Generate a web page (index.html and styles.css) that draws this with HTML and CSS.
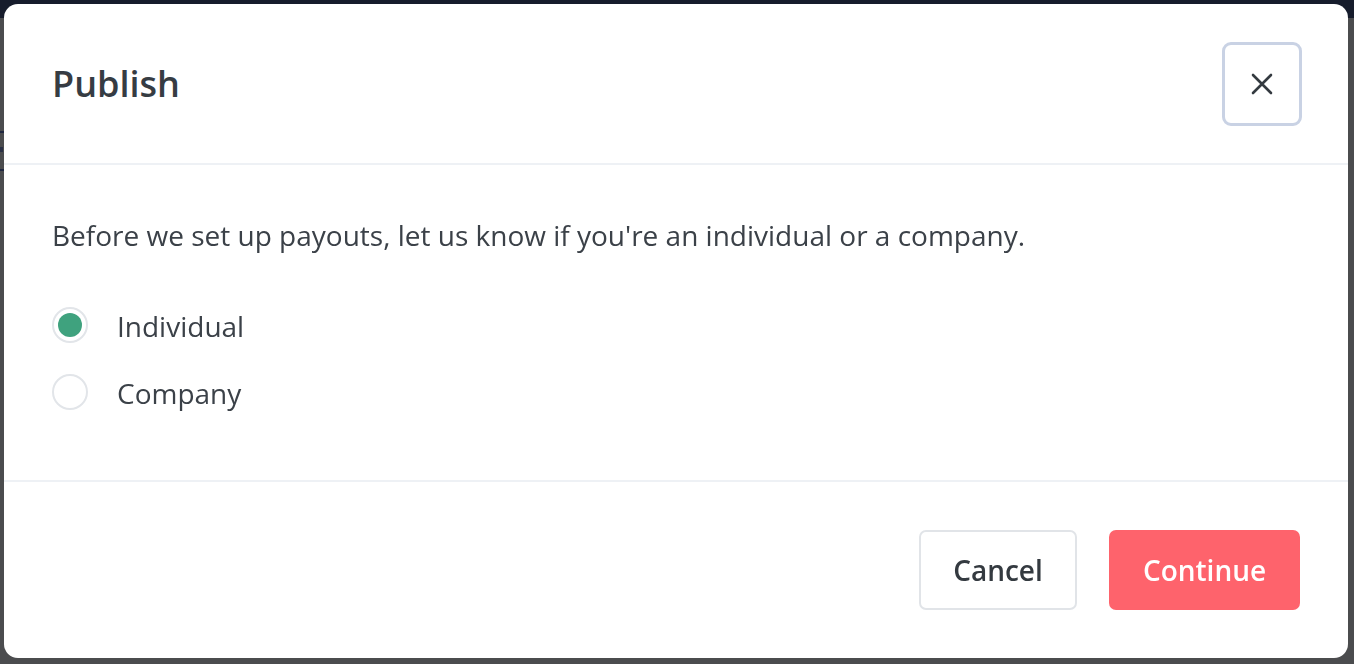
FILE: index.html
```html
<!DOCTYPE html>
<html lang="en">
<head>
<meta charset="utf-8">
<title>Publish</title>
<link rel="stylesheet" href="styles.css">
</head>
<body>
<div class="page">
  <div class="topbar"></div>
  <div class="page-rest">
    <div class="ghost ghost-a"></div>
    <div class="ghost ghost-b"></div>
    <div class="ghost ghost-c"></div>
  </div>
</div>
<div class="modal" role="dialog" aria-labelledby="modal-title">
  <header class="modal-header">
    <h1 id="modal-title" class="modal-title">Publish</h1>
    <button class="close-btn" aria-label="Close">
      <svg width="22" height="22" viewBox="0 0 22 22" aria-hidden="true">
        <path d="M2 2 L20 20 M20 2 L2 20" stroke="#343a40" stroke-width="2.6" stroke-linecap="round" fill="none"/>
      </svg>
    </button>
  </header>
  <section class="modal-body">
    <p class="intro">Before we set up payouts, let us know if you're an individual or a company.</p>
    <div class="options">
      <label class="option">
        <span class="radio checked"><span class="dot"></span></span>
        <span class="option-label">Individual</span>
      </label>
      <label class="option">
        <span class="radio"></span>
        <span class="option-label">Company</span>
      </label>
    </div>
  </section>
  <footer class="modal-footer">
    <button class="btn btn-secondary">Cancel</button>
    <button class="btn btn-primary">Continue</button>
  </footer>
</div>
</body>
</html>
```

FILE: styles.css
```css
* { box-sizing: border-box; }

html, body {
  margin: 0;
  padding: 0;
  height: 100%;
}

body {
  background: #4b4c4e;
  font-family: "Open Sans", "Liberation Sans", sans-serif;
  overflow: hidden;
}

.page {
  display: flex;
  flex-direction: column;
  height: 100%;
}

.topbar {
  height: 18px;
  background: #161c2c;
  flex: none;
}

.page-rest {
  flex: 1;
  background: #4b4c4e;
  padding-top: 113px;
}

.ghost {
  width: 4px;
  background: #1f2740;
}
.ghost-a { height: 2px; }
.ghost-b { height: 5px; margin-top: 14px; width: 3px; background: #2a3045; }
.ghost-c { height: 2px; margin-top: 17px; }

.modal {
  position: fixed;
  top: 4px;
  left: 4px;
  width: 1344px;
  height: 654px;
  background: #ffffff;
  border-radius: 14px;
  display: flex;
  flex-direction: column;
  color: #373d44;
}

.modal-header {
  height: 161px;
  flex: none;
  display: flex;
  align-items: center;
  justify-content: space-between;
  padding: 0 46px 0 48px;
  border-bottom: 2px solid #eef1f5;
}

.modal-title {
  margin: 0;
  font-size: 36px;
  font-weight: 600;
  color: #363c43;
}

.close-btn {
  width: 80px;
  height: 84px;
  border: 3px solid #c9d2e4;
  border-radius: 9px;
  background: #fff;
  display: flex;
  align-items: center;
  justify-content: center;
  padding: 0;
}

.modal-body {
  flex: 1;
  padding: 50px 48px 0 48px;
  border-bottom: 2px solid #eef1f5;
}

.intro {
  margin: 0;
  font-size: 28px;
  line-height: 40px;
  color: #3b4148;
}

.options {
  display: flex;
  flex-direction: column;
  gap: 31px;
  margin-top: 52px;
}

.option {
  display: flex;
  align-items: center;
  gap: 29px;
  height: 36px;
}

.radio {
  width: 36px;
  height: 36px;
  border-radius: 50%;
  border: 2px solid #e2e5e9;
  display: flex;
  align-items: center;
  justify-content: center;
  flex: none;
}

.dot {
  width: 24px;
  height: 24px;
  border-radius: 50%;
  background: #3fa27e;
}

.option-label {
  font-size: 28px;
  color: #3b4148;
  padding-top: 1px;
}

.modal-footer {
  height: 176px;
  flex: none;
  display: flex;
  align-items: center;
  justify-content: flex-end;
  gap: 32px;
  padding: 0 48px;
}

.btn {
  height: 80px;
  border-radius: 7px;
  font-family: "Open Sans", "Liberation Sans", sans-serif;
  font-size: 28px;
  font-weight: 600;
  padding: 0;
}

.btn-secondary {
  width: 158px;
  background: #fff;
  border: 2px solid #e1e4e8;
  color: #343a40;
}

.btn-primary {
  width: 191px;
  background: #fe636c;
  border: none;
  color: #ffffff;
}
```
